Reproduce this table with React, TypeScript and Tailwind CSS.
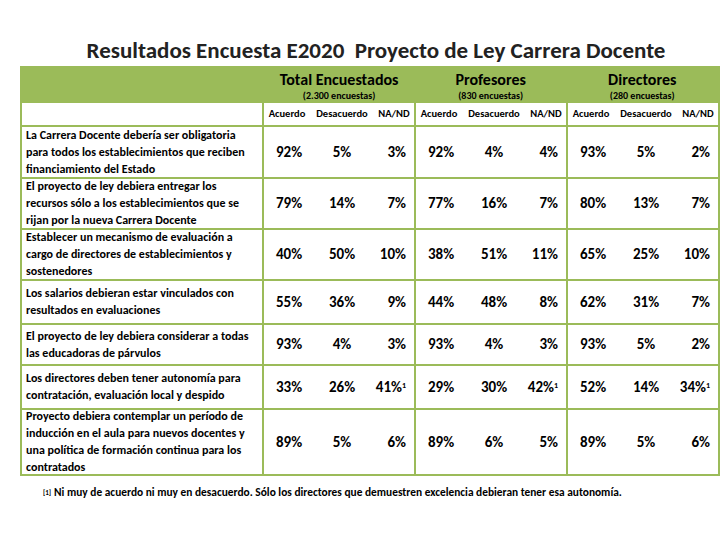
const groups = [
  { title: "Total Encuestados", sub: "(2.300 encuestas)" },
  { title: "Profesores", sub: "(830 encuestas)" },
  { title: "Directores", sub: "(280 encuestas)" },
];

type Row = { q: string[]; h: string; v: string[][] };

const rows: Row[] = [
  {
    q: [
      "La Carrera Docente debería ser obligatoria",
      "para todos los establecimientos que reciben",
      "financiamiento del Estado",
    ],
    h: "h-[52px]",
    v: [
      ["92%", "5%", "3%"],
      ["92%", "4%", "4%"],
      ["93%", "5%", "2%"],
    ],
  },
  {
    q: [
      "El proyecto de ley debiera entregar los",
      "recursos sólo a los establecimientos que se",
      "rijan por la nueva Carrera Docente",
    ],
    h: "h-[51px]",
    v: [
      ["79%", "14%", "7%"],
      ["77%", "16%", "7%"],
      ["80%", "13%", "7%"],
    ],
  },
  {
    q: [
      "Establecer un mecanismo de evaluación a",
      "cargo de directores de establecimientos y",
      "sostenedores",
    ],
    h: "h-[51px]",
    v: [
      ["40%", "50%", "10%"],
      ["38%", "51%", "11%"],
      ["65%", "25%", "10%"],
    ],
  },
  {
    q: ["Los salarios debieran estar vinculados con", "resultados en evaluaciones"],
    h: "h-[44px]",
    v: [
      ["55%", "36%", "9%"],
      ["44%", "48%", "8%"],
      ["62%", "31%", "7%"],
    ],
  },
  {
    q: ["El proyecto de ley debiera considerar a todas", "las educadoras de párvulos"],
    h: "h-[41px]",
    v: [
      ["93%", "4%", "3%"],
      ["93%", "4%", "3%"],
      ["93%", "5%", "2%"],
    ],
  },
  {
    q: ["Los directores deben tener autonomía para", "contratación, evaluación local y despido"],
    h: "h-[44px]",
    v: [
      ["33%", "26%", "41%¹"],
      ["29%", "30%", "42%¹"],
      ["52%", "14%", "34%¹"],
    ],
  },
  {
    q: [
      "Proyecto debiera contemplar un período de",
      "inducción en el aula para nuevos docentes y",
      "una política de formación continua para los",
      "contratados",
    ],
    h: "h-[66px]",
    v: [
      ["89%", "5%", "6%"],
      ["89%", "6%", "5%"],
      ["89%", "5%", "6%"],
    ],
  },
];

function Value({ text }: { text: string }) {
  const sup = text.endsWith("¹");
  const base = sup ? text.slice(0, -1) : text;
  return (
    <span>
      {base}
      {sup && <sup className="text-[8px] relative -top-[4px]">1</sup>}
    </span>
  );
}

export default function App() {
  return (
    <div
      className="w-[728px] h-[546px] bg-white text-black overflow-hidden"
      style={{ fontFamily: "Carlito, Lato, 'Open Sans', sans-serif" }}
    >
      <h1 className="pt-[36px] h-[66px] text-center text-[23px] font-bold leading-[28px] text-[#222] pl-[24px]">
        Resultados Encuesta E2020&nbsp; Proyecto de Ley Carrera Docente
      </h1>

      <div className="ml-[20px] w-[700px] border-2 border-[#9bbb59]">
        {/* Green header */}
        <div className="flex h-[35px] bg-[#9bbb59]">
          <div className="w-[242px]" />
          {groups.map((g) => (
            <div key={g.title} className="w-[152px] flex flex-col items-center pt-[2px]">
              <div className="text-[16px] font-bold leading-[19px]">{g.title}</div>
              <div className="text-[10px] font-bold leading-[13px]">{g.sub}</div>
            </div>
          ))}
        </div>

        {/* Sub header */}
        <div className="flex h-[22px]">
          <div className="w-[242px]" />
          {groups.map((g) => (
            <div
              key={g.title}
              className="w-[152px] border-l-2 border-[#9bbb59] grid grid-cols-[46px_64px_40px] items-center text-[10.5px] font-bold text-center"
            >
              <span>Acuerdo</span>
              <span>Desacuerdo</span>
              <span>NA/ND</span>
            </div>
          ))}
        </div>

        {/* Data rows */}
        {rows.map((r, i) => (
          <div key={i} className={`flex border-t-2 border-[#9bbb59] ${r.h}`}>
            <div className="w-[242px] flex flex-col justify-center px-[4px] text-[12px] font-bold leading-[17px]">
              {r.q.map((line) => (
                <div key={line} className="whitespace-nowrap">
                  {line}
                </div>
              ))}
            </div>
            {r.v.map((vals, j) => (
              <div
                key={j}
                className="w-[152px] border-l-2 border-[#9bbb59] grid grid-cols-[46px_64px_40px] items-center text-[15px] font-bold"
              >
                <span className="text-center pl-[4px]">
                  <Value text={vals[0]} />
                </span>
                <span className="text-center">
                  <Value text={vals[1]} />
                </span>
                <span className="text-right pr-[8px]">
                  <Value text={vals[2]} />
                </span>
              </div>
            ))}
          </div>
        ))}
      </div>

      <p className="ml-[43px] mt-[9px] text-[11.4px] font-bold leading-[14px]">
        <sup className="text-[7px] relative -top-[1px] mr-[3px]">[1]</sup>
        Ni muy de acuerdo ni muy en desacuerdo. Sólo los directores que demuestren excelencia debieran tener esa
        autonomía.
      </p>
    </div>
  );
}
